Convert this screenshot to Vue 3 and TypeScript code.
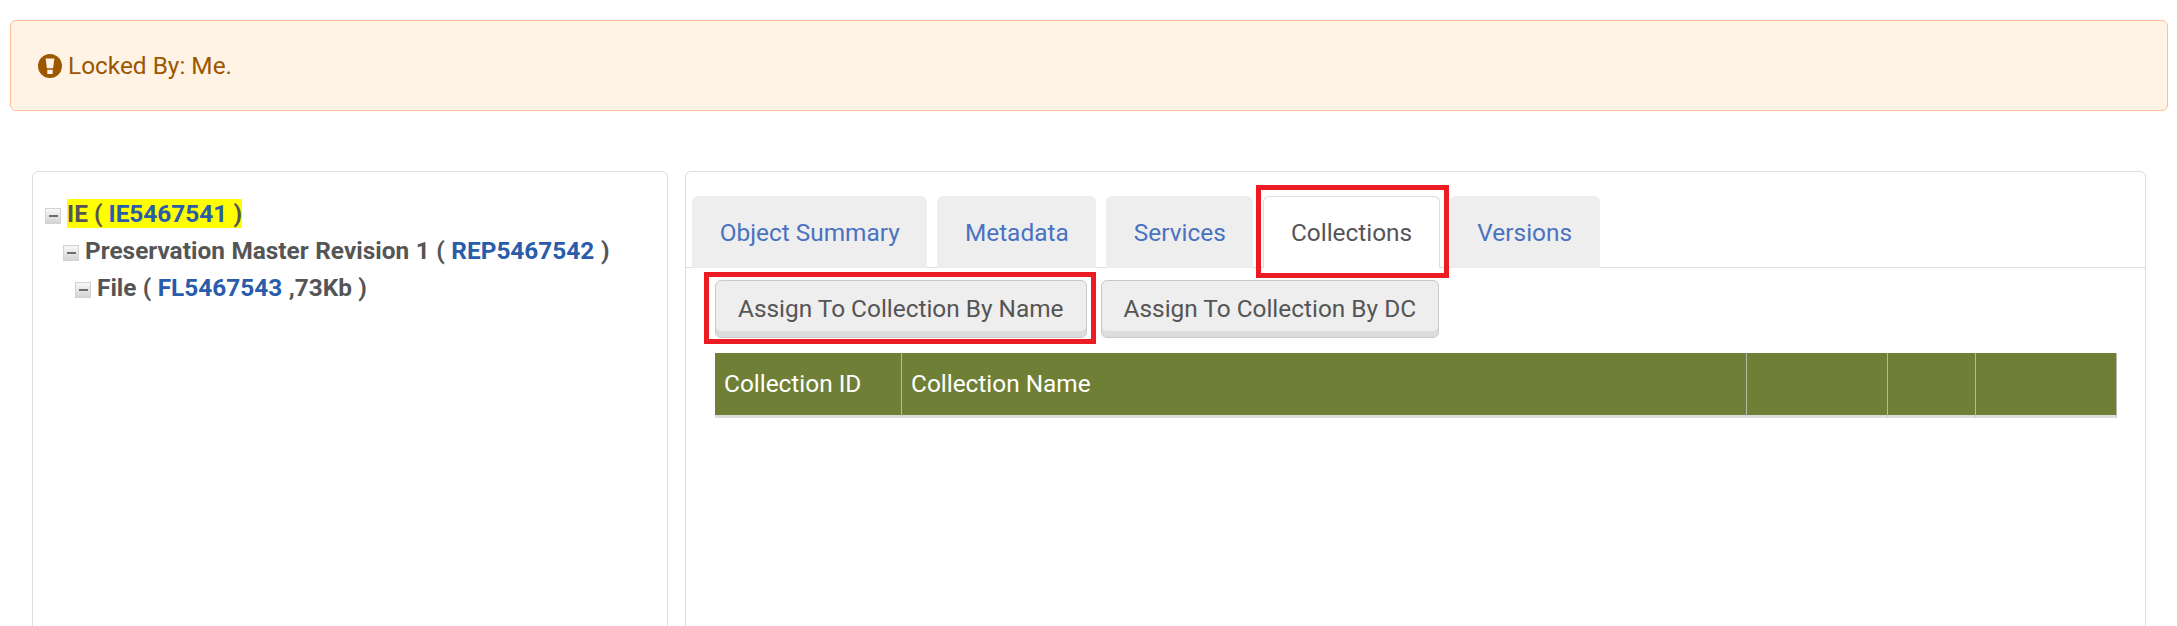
<script setup lang="ts">
interface TreeNode {
  label: string;
  id: string;
  suffix?: string;
}

const tabs = ["Object Summary", "Metadata", "Services", "Collections", "Versions"];
const activeTab = "Collections";

const nodes: TreeNode[] = [
  { label: "IE", id: "IE5467541" },
  { label: "Preservation Master Revision 1", id: "REP5467542" },
  { label: "File", id: "FL5467543", suffix: " ,73Kb" },
];
</script>

<template>
  <div class="page">
    <div class="alert">
      <svg class="alert-icon" viewBox="0 0 24 24" aria-hidden="true">
        <path
          fill-rule="evenodd"
          d="M12 0a12 12 0 1 0 0 24a12 12 0 0 0 0-24zM7.600 4.600h8.800l-1.300 9.600h-6.200zM9.300 15.800h5.400v4.200h-5.400z"
        />
      </svg>
      <span>Locked By: Me.</span>
    </div>

    <div class="panels">
      <div class="panel tree-panel">
        <div class="tree-row lvl-0">
          <span class="toggle"><i></i></span>
          <span class="node selected">{{ nodes[0].label }} ( <a>{{ nodes[0].id }}</a> )</span>
        </div>
        <div class="tree-row lvl-1">
          <span class="toggle"><i></i></span>
          <span class="node">{{ nodes[1].label }} ( <a>{{ nodes[1].id }}</a> )</span>
        </div>
        <div class="tree-row lvl-2">
          <span class="toggle"><i></i></span>
          <span class="node">{{ nodes[2].label }} ( <a>{{ nodes[2].id }}</a>{{ nodes[2].suffix }} )</span>
        </div>
      </div>

      <div class="panel main-panel">
        <ul class="tabs">
          <li v-for="tab in tabs" :key="tab" class="tab" :class="{ active: tab === activeTab }">
            {{ tab }}
          </li>
        </ul>

        <div class="tab-body">
          <div class="actions">
            <button class="btn callout-btn">Assign To Collection By Name</button>
            <button class="btn">Assign To Collection By DC</button>
          </div>

          <table class="grid">
            <colgroup>
              <col class="c-id" />
              <col class="c-name" />
              <col class="c-a" />
              <col class="c-b" />
              <col />
            </colgroup>
            <thead>
              <tr>
                <th>Collection ID</th>
                <th>Collection Name</th>
                <th></th>
                <th></th>
                <th></th>
              </tr>
            </thead>
          </table>
        </div>
      </div>
    </div>
  </div>
</template>

<style scoped>
.page {
  height: 626px;
  overflow: hidden;
  box-sizing: border-box;
  padding-top: 20px;
  font-family: Roboto, "Liberation Sans", sans-serif;
  color: #555;
}

.alert {
  display: flex;
  align-items: center;
  gap: 6px;
  box-sizing: border-box;
  height: 91px;
  margin: 0 9px 0 10px;
  padding-left: 27px;
  background: #fff3e6;
  border: 1px solid #ffbe96;
  border-radius: 6px;
  color: #9c5700;
  font-size: 24.4px;
}

.alert-icon {
  width: 24px;
  height: 24px;
  fill: #9c5700;
  flex-shrink: 0;
}

.panels {
  display: flex;
  gap: 17px;
  margin-top: 60px;
  padding-left: 32px;
  padding-right: 31px;
}

.panel {
  box-sizing: border-box;
  height: 600px;
  background: #fff;
  border: 1px solid #dcdde3;
  border-radius: 6px;
}

.tree-panel {
  width: 636px;
  flex-shrink: 0;
  padding-top: 23px;
  font-size: 24.4px;
  font-weight: 700;
}

.tree-row {
  display: flex;
  align-items: center;
  height: 37px;
  white-space: nowrap;
}

.lvl-0 {
  padding-left: 12px;
}

.lvl-1 {
  padding-left: 30px;
  word-spacing: 0.5px;
}

.lvl-2 {
  padding-left: 42px;
  word-spacing: 0.3px;
}

.toggle {
  display: flex;
  align-items: center;
  justify-content: center;
  box-sizing: border-box;
  width: 16px;
  height: 16px;
  margin-right: 6px;
  margin-top: 5px;
  background: linear-gradient(#f8f8f8, #d4d4d4);
  border: 1px solid #d2d2d2;
  flex-shrink: 0;
}

.toggle i {
  display: block;
  width: 9px;
  height: 2px;
  background: #6e6e6e;
}

.node {
  line-height: 29px;
}

.node a {
  color: #2a5caa;
}

.selected {
  background: #ffff00;
}

.main-panel {
  flex: 1;
  min-width: 0;
  padding-top: 24px;
}

.tabs {
  display: flex;
  gap: 9.8px;
  height: 71px;
  margin: 0;
  padding: 0 0 0 6px;
  list-style: none;
  border-bottom: 1px solid #ddd;
}

.tab {
  box-sizing: border-box;
  height: 72px;
  padding: 22px 27.7px 0;
  background: #eee;
  border-radius: 6px 6px 0 0;
  color: #4a72c0;
  font-size: 24.4px;
  line-height: 29px;
  white-space: nowrap;
}

.tab.active {
  position: relative;
  background: #fff;
  border: 1px solid #ddd;
  border-bottom-color: #fff;
  padding: 21px 26.7px 0;
  color: #555;
}

/* red annotation box drawn on the screenshot */
.tab.active::after {
  content: "";
  position: absolute;
  left: -8px;
  right: -10px;
  top: -12px;
  bottom: -11px;
  border: 5px solid #ed1c24;
  pointer-events: none;
}

.tab-body {
  padding: 12px 28px 0 29px;
}

.actions {
  display: flex;
  gap: 14px;
}

.btn {
  box-sizing: border-box;
  height: 58px;
  padding: 0 22px 2px;
  background: #eee;
  border: 1px solid #c8c8c8;
  border-radius: 6px;
  box-shadow: inset 0 -6px 0 #ddd;
  color: #555;
  font-family: inherit;
  font-size: 24.4px;
  white-space: nowrap;
}

.callout-btn {
  position: relative;
}

.callout-btn::after {
  content: "";
  position: absolute;
  left: -12px;
  right: -10px;
  top: -9px;
  bottom: -7px;
  border: 5px solid #ed1c24;
  pointer-events: none;
}

.grid {
  width: 1402px;
  margin-top: 15px;
  border-collapse: separate;
  border-spacing: 0;
  table-layout: fixed;
}

.c-id {
  width: 187px;
}

.c-name {
  width: 845px;
}

.c-a {
  width: 141px;
}

.c-b {
  width: 88px;
}

.grid th {
  box-sizing: border-box;
  height: 65px;
  padding: 0 9px 2px;
  background: #6f7f36;
  border-right: 1px solid #b5b9a8;
  border-bottom: 3px solid #ddd;
  color: #fff;
  font-size: 24.4px;
  font-weight: 400;
  text-align: left;
  white-space: nowrap;
}
</style>

<style>
html,
body {
  margin: 0;
  background: #fff;
  overflow: hidden;
}
</style>
